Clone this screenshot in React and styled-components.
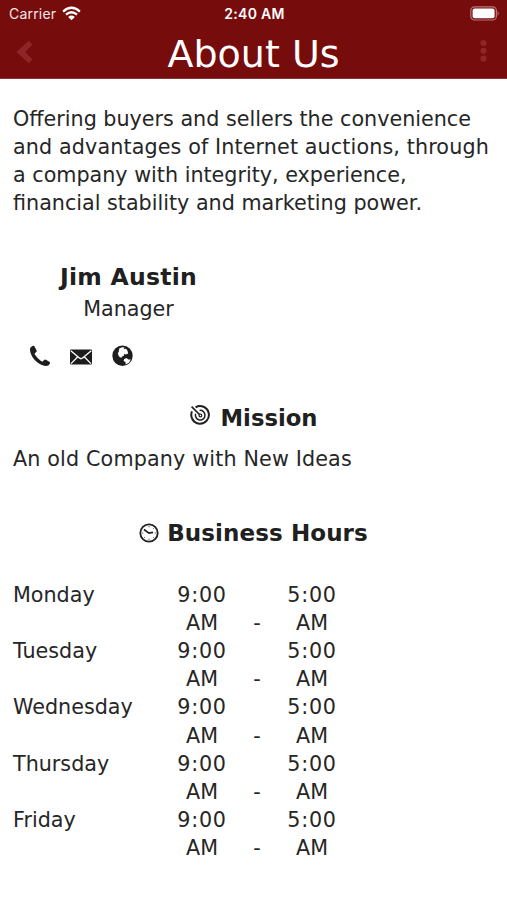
import React from "react";
import styled, { createGlobalStyle } from "styled-components";

const GlobalStyle = createGlobalStyle`
  * {
    box-sizing: border-box;
  }
  body {
    margin: 0;
    background-color: white;
    color: #262626;
    font-family: Verdana, "DejaVu Sans", sans-serif;
    font-size: 20.7px;
    line-height: 28.1px;
  }
`;

const Screen = styled.div`
  width: 507px;
  height: 900px;
  overflow: hidden;
  background-color: white;
`;

const Header = styled.header`
  height: 79px;
  background-color: #760c0c;
  border-bottom: 1px solid #8d3434;
  color: white;
`;

const StatusBar = styled.div`
  display: grid;
  grid-template-columns: 1fr auto 1fr;
  align-items: center;
  height: 27px;
  padding: 0 7px 0 9px;
  font-family: Inter, sans-serif;
  font-size: 14px;
  line-height: 26px;
`;

const Carrier = styled.div`
  display: flex;
  align-items: center;
  gap: 6px;
  color: #f6e6e6;
  letter-spacing: 0.2px;
`;

const Clock = styled.div`
  font-size: 14px;
  font-weight: 600;
  letter-spacing: 0.3px;
`;

const Battery = styled.svg`
  justify-self: end;
`;

const NavBar = styled.div`
  display: flex;
  justify-content: space-between;
  align-items: center;
  height: 51px;
  padding: 0 18px 2px 16px;
`;

const NavButton = styled.button`
  display: flex;
  width: 17px;
  padding: 0;
  border: none;
  background: none;
  color: #8e2527;
`;

const Title = styled.h1`
  margin: 0;
  padding: 4px 0 0 2px;
  font-size: 38px;
  font-weight: normal;
  line-height: 50px;
`;

const Content = styled.main`
  padding: 26px 13px 0;
`;

const Paragraph = styled.p`
  margin: ${({ top }) => top || "0"} 0 0;
  letter-spacing: ${({ spacing }) => spacing || "normal"};
`;

const Line = styled.span`
  display: block;
  white-space: nowrap;
  letter-spacing: ${({ spacing }) => spacing || "inherit"};
`;

const Contact = styled.section`
  width: 231px;
  margin-top: 45px;
  text-align: center;
`;

const Heading = styled.h2`
  display: flex;
  justify-content: center;
  align-items: center;
  gap: ${({ gap }) => gap || "0"};
  margin: 0;
  font-size: ${({ size }) => size || "22.7px"};
  font-weight: bold;
  line-height: 30px;
  color: #202020;
  letter-spacing: ${({ spacing }) => spacing || "normal"};
`;

const IconRow = styled.div`
  display: flex;
  align-items: center;
  gap: 19px;
  height: 24px;
  margin-top: 21px;
  padding-left: 16px;
  color: #1d1d1d;
`;

const Mission = styled.section`
  margin-top: 35px;
`;

const MissionIcon = styled.svg`
  margin-bottom: 7px;
`;

const Hours = styled.section`
  margin-top: 44px;
`;

const HoursTable = styled.div`
  margin-top: 33.5px;
`;

const Day = styled.div`
  display: grid;
  grid-template-columns: 151px 76px 34px 76px;
  height: 56.2px;
`;

const Time = styled.div`
  display: flex;
  flex-direction: column;
  align-items: center;
`;

const Digits = styled.span`
  letter-spacing: 0.8px;
`;

const Dash = styled.span`
  align-self: end;
  text-align: center;
`;

const days = ["Monday", "Tuesday", "Wednesday", "Thursday", "Friday"];

function WifiIcon() {
  return (
    <svg width="19" height="15" viewBox="0 0 19 15" fill="none">
      <g stroke="white" strokeWidth="2.3">
        <path d="M1.1 5.6Q9.5-2 17.9 5.6" />
        <path d="M4 8.7Q9.5 3.8 15 8.7" />
      </g>
      <path d="M6.2 10.9Q9.5 8.1 12.8 10.9L9.5 14.3Z" fill="white" />
    </svg>
  );
}

function BatteryIcon() {
  return (
    <Battery width="30" height="15" viewBox="0 0 30 15">
      <rect x="0.8" y="0.8" width="25.6" height="13.2" rx="3.8" fill="none" stroke="#b87778" strokeWidth="1.2" />
      <rect x="2.6" y="2.6" width="22" height="9.6" rx="2" fill="white" />
      <path d="M27.6 5Q30 7.4 27.6 9.8Z" fill="#b87778" />
    </Battery>
  );
}

function BackIcon() {
  return (
    <svg width="17" height="24" viewBox="0 0 17 24">
      <path d="M12.7 .8L16.5 4.4L9.3 12L16.5 19.6L12.7 23.2L.5 12Z" fill="currentColor" />
    </svg>
  );
}

function MoreIcon() {
  return (
    <svg width="17" height="24" viewBox="0 1 17 24" fill="currentColor">
      <circle cx="11.5" cy="4" r="3.1" />
      <circle cx="11.5" cy="11.8" r="3.1" />
      <circle cx="11.5" cy="19.6" r="3.1" />
    </svg>
  );
}

function PhoneIcon() {
  return (
    <svg width="22" height="22" viewBox="0 0 22 22" fill="currentColor">
      <path d="M4 .8C2.2 1.5.8 2.8 1 5C1.7 12.4 8.5 19.8 16.4 21C18.6 21.2 20 20.3 20.9 18.5Q21.4 17.4 20.4 16.8L16.8 14.7Q15.8 14.2 15.1 15L13.7 16.4Q12.9 16.8 12 16.1Q8.4 13.3 5.8 9.5Q5.4 8.5 6.1 7.9L7.3 6.9Q8.1 6.2 7.5 5.2L5.5 1.4Q5 .4 4 .8Z" />
    </svg>
  );
}

function MailIcon() {
  return (
    <svg width="22" height="22" viewBox="0 0 22 22">
      <rect x="0" y="4.6" width="22" height="15" rx="1" fill="currentColor" />
      <path
        d="M.8 5.8L9.4 13.1Q11 14.4 12.6 13.1L21.2 5.8M1 18.6L7.8 11.8M21 18.6L14.2 11.8"
        fill="none"
        stroke="white"
        strokeWidth="1.3"
      />
    </svg>
  );
}

function GlobeIcon() {
  return (
    <svg width="22" height="22" viewBox="-1 0 22 22">
      <circle cx="10.5" cy="10.8" r="10.2" fill="currentColor" />
      <path d="M7.2 3.6L10 2.2L12.6 2.6L11.6 4.2L14 3.8L15.4 5.6L16.2 8.6L13.8 9.4L12.4 8.8L11.6 11L9.8 11.6L9.4 13L7 11.4L5.8 8.4L6.8 6.4Z" fill="white" />
      <path d="M12 14.2L14.4 13L16.4 14.4L18.8 14.4L17.2 17.4L13.8 19.6L13.4 17L11.6 16Z" fill="white" />
    </svg>
  );
}

function TargetIcon() {
  return (
    <MissionIcon width="20" height="20" viewBox="0 0 20 20" fill="none" stroke="currentColor">
      <path d="M5.6 2.3A8.8 8.8 0 1 1 2 6.4" strokeWidth="2" />
      <path d="M9.6 5.4A4.8 4.8 0 1 1 5.6 8.8" strokeWidth="1.5" />
      <circle cx="10.4" cy="10.4" r="1.4" strokeWidth="1.2" />
      <path d="M1.6 1.6L10 10" strokeWidth="1.7" />
    </MissionIcon>
  );
}

function ClockIcon() {
  return (
    <svg width="20" height="20" viewBox="0 0 20 20" fill="none" stroke="currentColor">
      <circle cx="10" cy="10" r="8.7" strokeWidth="1.8" />
      <path d="M4.9 6.5L10 10.2L14 9.3" strokeWidth="1.7" />
      <path d="M10 3V4.3M10 15.7V17M3 10H4.3M15.7 10H17M5.2 14.8L6 14M14.8 14.8L14 14M14.8 5.2L14 6" strokeWidth="0.7" />
    </svg>
  );
}

function App() {
  return (
    <Screen>
      <GlobalStyle />
      <Header>
        <StatusBar>
          <Carrier>
            Carrier
            <WifiIcon />
          </Carrier>
          <Clock>2:40 AM</Clock>
          <BatteryIcon />
        </StatusBar>
        <NavBar>
          <NavButton aria-label="Back">
            <BackIcon />
          </NavButton>
          <Title>About Us</Title>
          <NavButton aria-label="More">
            <MoreIcon />
          </NavButton>
        </NavBar>
      </Header>
      <Content>
        <Paragraph>
          <Line>Offering buyers and sellers the convenience</Line>
          <Line spacing="0.12px">and advantages of Internet auctions, through</Line>
          <Line>a company with integrity, experience,</Line>
          <Line>financial stability and marketing power.</Line>
        </Paragraph>
        <Contact>
          <Heading size="23.5px" spacing="0.25px">
            Jim Austin
          </Heading>
          <Paragraph top="3px">Manager</Paragraph>
          <IconRow>
            <PhoneIcon />
            <MailIcon />
            <GlobeIcon />
          </IconRow>
        </Contact>
        <Mission>
          <Heading gap="11px">
            <TargetIcon />
            Mission
          </Heading>
          <Paragraph top="12px" spacing="0.15px">
            An old Company with New Ideas
          </Paragraph>
        </Mission>
        <Hours>
          <Heading gap="8px" size="23px" spacing="0.1px">
            <ClockIcon />
            Business Hours
          </Heading>
          <HoursTable>
            {days.map((day) => (
              <Day key={day}>
                <span>{day}</span>
                <Time>
                  <Digits>9:00</Digits>
                  <span>AM</span>
                </Time>
                <Dash>-</Dash>
                <Time>
                  <Digits>5:00</Digits>
                  <span>AM</span>
                </Time>
              </Day>
            ))}
          </HoursTable>
        </Hours>
      </Content>
    </Screen>
  );
}

export default App;
